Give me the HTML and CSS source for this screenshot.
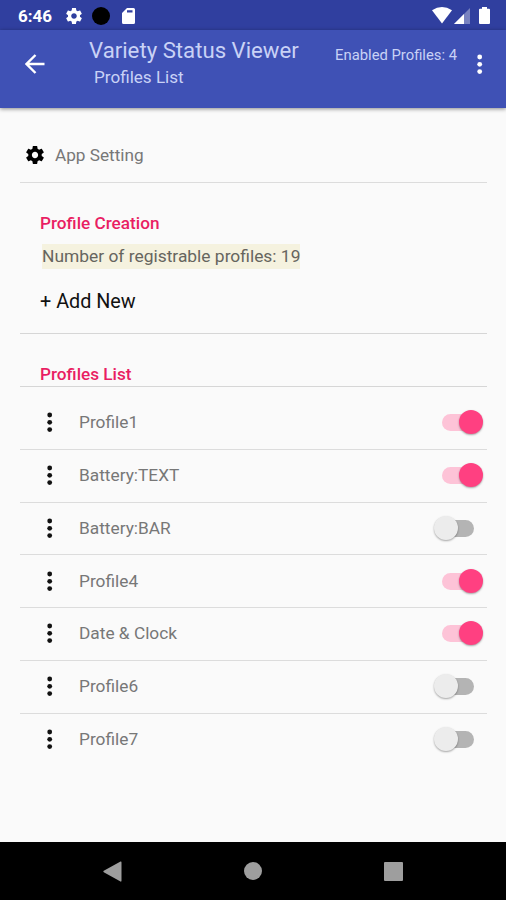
FILE: index.html
```html
<!DOCTYPE html>
<html lang="en">
<head>
<meta charset="utf-8">
<title>Variety Status Viewer</title>
<link rel="stylesheet" href="styles.css">
</head>
<body>
<svg class="defs" width="0" height="0">
  <symbol id="gear" viewBox="2 2 20 20"><path d="M19.43 12.98c.04-.32.07-.64.07-.98s-.03-.66-.07-.98l2.11-1.65c.19-.15.24-.42.12-.64l-2-3.46c-.12-.22-.39-.3-.61-.22l-2.49 1c-.52-.4-1.08-.73-1.69-.98l-.38-2.65C14.46 2.18 14.25 2 14 2h-4c-.25 0-.46.18-.49.42l-.38 2.65c-.61.25-1.17.59-1.69.98l-2.49-1c-.23-.09-.49 0-.61.22l-2 3.46c-.13.22-.07.49.12.64l2.11 1.65c-.04.32-.07.65-.07.98s.03.66.07.98l-2.11 1.65c-.19.15-.24.42-.12.64l2 3.46c.12.22.39.3.61.22l2.49-1c.52.4 1.08.73 1.69.98l.38 2.65c.03.24.24.42.49.42h4c.25 0 .46-.18.49-.42l.38-2.65c.61-.25 1.17-.59 1.69-.98l2.49 1c.23.09.49 0 .61-.22l2-3.46c.12-.22.07-.49-.12-.64l-2.11-1.65zM12 15.500c-1.930 0-3.500-1.570-3.500-3.500s1.570-3.500 3.500-3.500 3.500 1.570 3.500 3.500-1.570 3.500-3.500 3.500z"/></symbol>
  <symbol id="dots" viewBox="0 0 6 21"><circle cx="2.700" cy="3" r="2.400"/><circle cx="2.700" cy="10.300" r="2.400"/><circle cx="2.700" cy="17.600" r="2.400"/></symbol>
</svg>
<div class="status">
  <span class="time">6:46</span>
  <svg class="s-gear" width="16" height="16"><use href="#gear"/></svg>
  <span class="s-dot"></span>
  <svg class="s-card" width="13" height="16" viewBox="0 0 13 16"><path fill-rule="evenodd" d="M5 0h6.500A1.500 1.500 0 0 1 13 1.500v13a1.500 1.500 0 0 1-1.500 1.500h-10A1.500 1.500 0 0 1 0 14.500V5zM5 2.300v2.200h5.500V2.300z"/></svg>
  <svg class="s-wifi" width="20" height="17" viewBox="0 0 20 17"><path d="M0 3.200Q10-3 20 3.200L10 16.500z"/></svg>
  <svg class="s-cell" width="16" height="16" viewBox="0 0 16 16"><path opacity=".35" d="M16 0v16H0z"/><path d="M10 6v10H0z"/></svg>
  <svg class="s-batt" width="11" height="17" viewBox="0 0 11 17"><path d="M3 0h5v1.800h2a1 1 0 0 1 1 1V16a1 1 0 0 1-1 1H1a1 1 0 0 1-1-1V2.800a1 1 0 0 1 1-1h2z"/></svg>
</div>
<header class="bar">
  <svg class="back" width="20" height="20" viewBox="0 0 20 20"><path d="M19.500 10H1.800M10.500 1L1.500 10l9 9" fill="none" stroke="#fff" stroke-width="2.400"/></svg>
  <div class="titles">
    <h1 class="title">Variety Status Viewer</h1>
    <div class="subtitle">Profiles List</div>
  </div>
  <span class="enabled">Enabled Profiles: 4</span>
  <svg class="more" width="6" height="21"><use href="#dots"/></svg>
</header>
<main class="content">
  <section class="setting">
    <svg width="18" height="18"><use href="#gear"/></svg>
    <span class="setting-text">App Setting</span>
  </section>
  <section class="creation">
    <h2 class="heading">Profile Creation</h2>
    <div class="count">Number of registrable profiles: 19</div>
    <div class="add">+ Add New</div>
  </section>
  <section class="list-head"><h2 class="heading">Profiles List</h2></section>
  <ul class="list">
    <li class="row"><svg class="row-dots" width="6" height="21"><use href="#dots"/></svg><span class="name">Profile1</span><span class="switch on"></span></li>
    <li class="row"><svg class="row-dots" width="6" height="21"><use href="#dots"/></svg><span class="name">Battery:TEXT</span><span class="switch on"></span></li>
    <li class="row"><svg class="row-dots" width="6" height="21"><use href="#dots"/></svg><span class="name">Battery:BAR</span><span class="switch"></span></li>
    <li class="row"><svg class="row-dots" width="6" height="21"><use href="#dots"/></svg><span class="name">Profile4</span><span class="switch on"></span></li>
    <li class="row"><svg class="row-dots" width="6" height="21"><use href="#dots"/></svg><span class="name">Date &amp; Clock</span><span class="switch on"></span></li>
    <li class="row"><svg class="row-dots" width="6" height="21"><use href="#dots"/></svg><span class="name">Profile6</span><span class="switch"></span></li>
    <li class="row"><svg class="row-dots" width="6" height="21"><use href="#dots"/></svg><span class="name">Profile7</span><span class="switch"></span></li>
  </ul>
</main>
<nav class="nav">
  <svg width="19" height="21" viewBox="0 0 19 21"><path d="M17.500.5Q18.500 0 18.500 1.500v18q0 1.500-1 1L.8 11.200q-1-.7 0-1.400z"/></svg>
  <svg width="18" height="18"><circle cx="9" cy="9" r="9"/></svg>
  <svg width="19" height="19"><rect width="19" height="19" rx="1"/></svg>
</nav>
</body>
</html>
```
FILE: styles.css
```css
* { box-sizing: border-box; }
body {
  margin: 0;
  width: 506px;
  height: 900px;
  display: flex;
  flex-direction: column;
  overflow: hidden;
  background: #fafafa;
  font-family: Roboto, "Liberation Sans", sans-serif;
}
svg { flex: none; display: block; }
h1, h2, ul { margin: 0; padding: 0; }
.defs { display: none; }
.status {
  height: 30px;
  flex: none;
  display: flex;
  align-items: center;
  background: #303f9f;
  color: #fff;
  fill: #fff;
  padding: 1px 16px 0 18px;
}
.time { width: 48px; font-size: 17px; font-weight: 700; line-height: 20px; }
.s-dot { width: 18px; height: 18px; border-radius: 50%; background: #000; margin: 0 12px 0 10px; }
.s-wifi { margin-left: auto; }
.s-cell { margin: 0 9px 0 2px; }
.bar {
  height: 78px;
  flex: none;
  display: flex;
  align-items: flex-start;
  background: #3f51b5;
  color: #c9d2f6;
  box-shadow: 0 1px 4px rgba(0, 0, 0, .45);
  padding: 0 23px 0 25px;
}
.back { margin-top: 24px; }
.titles { margin-left: 44px; flex: 1; white-space: nowrap; }
.title { font-size: 22.2px; font-weight: 400; line-height: 26px; margin-top: 7px; }
.subtitle { font-size: 17.1px; line-height: 20px; margin: 4px 0 0 5px; }
.enabled { font-size: 14.8px; line-height: 18px; margin: 16px 20px 0 0; white-space: nowrap; }
.more { fill: #fff; margin-top: 24px; }
.content { flex: 1; padding: 20px 19px 0 20px; }
.setting {
  height: 55px;
  display: flex;
  align-items: center;
  border-bottom: 1px solid #dcdcdc;
  padding-left: 6px;
}
.setting-text { font-size: 17.2px; line-height: 20px; color: #777; margin-left: 11px; }
.creation { height: 151px; border-bottom: 1px solid #d6d6d6; padding: 30px 0 0 20px; }
.heading { font-size: 17.2px; font-weight: 500; line-height: 20px; color: #e91e63; }
.count {
  width: 258px;
  height: 25px;
  margin: 11px 0 0 2px;
  background: #f5f2df;
  color: #66655e;
  font-size: 17.4px;
  line-height: 24px;
  white-space: nowrap;
}
.add { font-size: 19.8px; line-height: 24px; margin-top: 21px; color: #111; }
.list-head { height: 53px; padding: 30px 0 0 20px; border-bottom: 1px solid #d6d6d6; }
.list { list-style: none; padding-top: 10px; }
.row {
  height: 52.75px;
  display: flex;
  align-items: center;
  border-bottom: 1px solid #dcdcdc;
  padding: 0 13px 0 27px;
}
.row:last-child { border: 0; height: 51.5px; }
.row-dots { fill: #111; }
.name { flex: 1; margin-left: 26px; padding-bottom: 1px; font-size: 17.3px; line-height: 20px; color: #777; }
.switch { width: 32px; height: 17px; border-radius: 9px; background: #b4b4b4; position: relative; }
.switch::after {
  content: "";
  position: absolute;
  left: -8px;
  top: -4px;
  width: 24px;
  height: 24px;
  border-radius: 50%;
  background: #ececec;
  box-shadow: 0 1px 2px rgba(0, 0, 0, .35);
}
.switch.on { background: #fdc3d7; }
.switch.on::after { left: 16.5px; background: #ff4081; }
.nav {
  height: 58px;
  flex: none;
  display: flex;
  align-items: center;
  background: #000;
  fill: #9e9e9e;
  padding-left: 103px;
  gap: 122px;
}
```
